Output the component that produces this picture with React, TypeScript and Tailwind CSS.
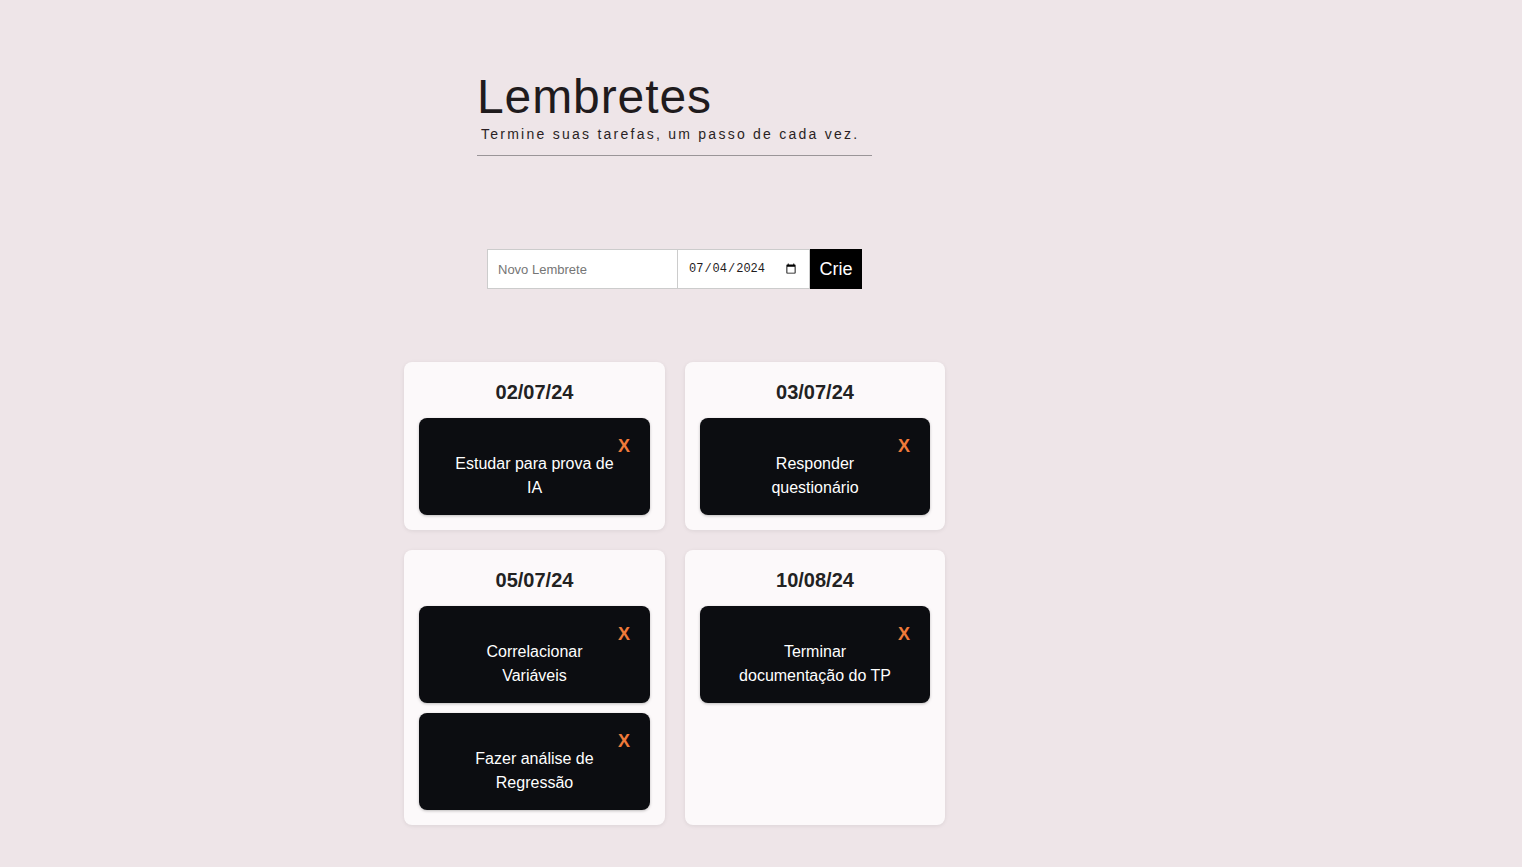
import { useState } from 'react';

type Lembrete = { id: number; texto: string };
type Grupo = { data: string; itens: Lembrete[] };

const grupos: Grupo[] = [
  { data: '02/07/24', itens: [{ id: 1, texto: 'Estudar para prova de IA' }] },
  { data: '03/07/24', itens: [{ id: 2, texto: 'Responder questionário' }] },
  {
    data: '05/07/24',
    itens: [
      { id: 3, texto: 'Correlacionar Variáveis' },
      { id: 4, texto: 'Fazer análise de Regressão' },
    ],
  },
  { data: '10/08/24', itens: [{ id: 5, texto: 'Terminar documentação do TP' }] },
];

function TaskCard({ texto }: { texto: string }) {
  return (
    <div className="bg-[#0c0d11] rounded-lg pt-[17px] pb-[15px] px-5 shadow-[0_1px_3px_rgba(0,0,0,0.25)]">
      <div className="flex justify-end h-[17px]">
        <button className="text-[18px] leading-[17px] font-bold text-[#f07a3a] translate-y-[3px]">X</button>
      </div>
      <p className="w-[162px] mx-auto text-center text-white text-base leading-6">{texto}</p>
    </div>
  );
}

export default function App() {
  const [novo, setNovo] = useState('');
  const [data, setData] = useState('2024-07-04');

  return (
    <div
      className="min-h-screen bg-[#eee5e8] text-[#1f1b1d]"
      style={{ fontFamily: '"Liberation Sans", Arial, sans-serif' }}
    >
      <div className="w-[1349px] flex flex-col items-center pt-[69px] pb-10">
        {/* Header */}
        <div className="w-[395px] border-b border-[#9a9598] pb-[13px]">
          <h1 className="text-[48px] leading-[55px] tracking-[0.9px] font-normal">Lembretes</h1>
          <p className="pl-[4px] mt-[2px] text-[14px] leading-4 tracking-[2.25px] text-[#2a1f24]">
            Termine suas tarefas, um passo de cada vez.
          </p>
        </div>

        {/* Form */}
        <div className="flex mt-[93px]">
          <input
            value={novo}
            onChange={(e) => setNovo(e.target.value)}
            placeholder="Novo Lembrete"
            className="w-[191px] h-10 bg-white border border-[#cccccc] px-[10px] text-[13px] placeholder:text-[#757575] outline-none"
          />
          <input
            type="date"
            value={data}
            onChange={(e) => setData(e.target.value)}
            className="w-[132px] h-10 bg-white border border-l-0 border-[#cccccc] px-[10px] text-[12px] outline-none"
            style={{ fontFamily: '"Liberation Mono", monospace' }}
          />
          <button className="w-[52px] h-10 bg-black text-white text-[18px]">Crie</button>
        </div>

        {/* Cards */}
        <div className="grid grid-cols-[261px_260px] gap-x-5 gap-y-5 mt-[73px]">
          {grupos.map((g) => (
            <div key={g.data} className="bg-[#fcf9fa] rounded-lg px-[15px] pt-[16px] pb-[15px] shadow-[0_1px_4px_rgba(0,0,0,0.08)]">
              <h2 className="text-xl leading-7 font-bold text-center text-[#222] mb-[12px]">{g.data}</h2>
              <div className="flex flex-col gap-[10px]">
                {g.itens.map((t) => (
                  <TaskCard key={t.id} texto={t.texto} />
                ))}
              </div>
            </div>
          ))}
        </div>
      </div>
    </div>
  );
}
